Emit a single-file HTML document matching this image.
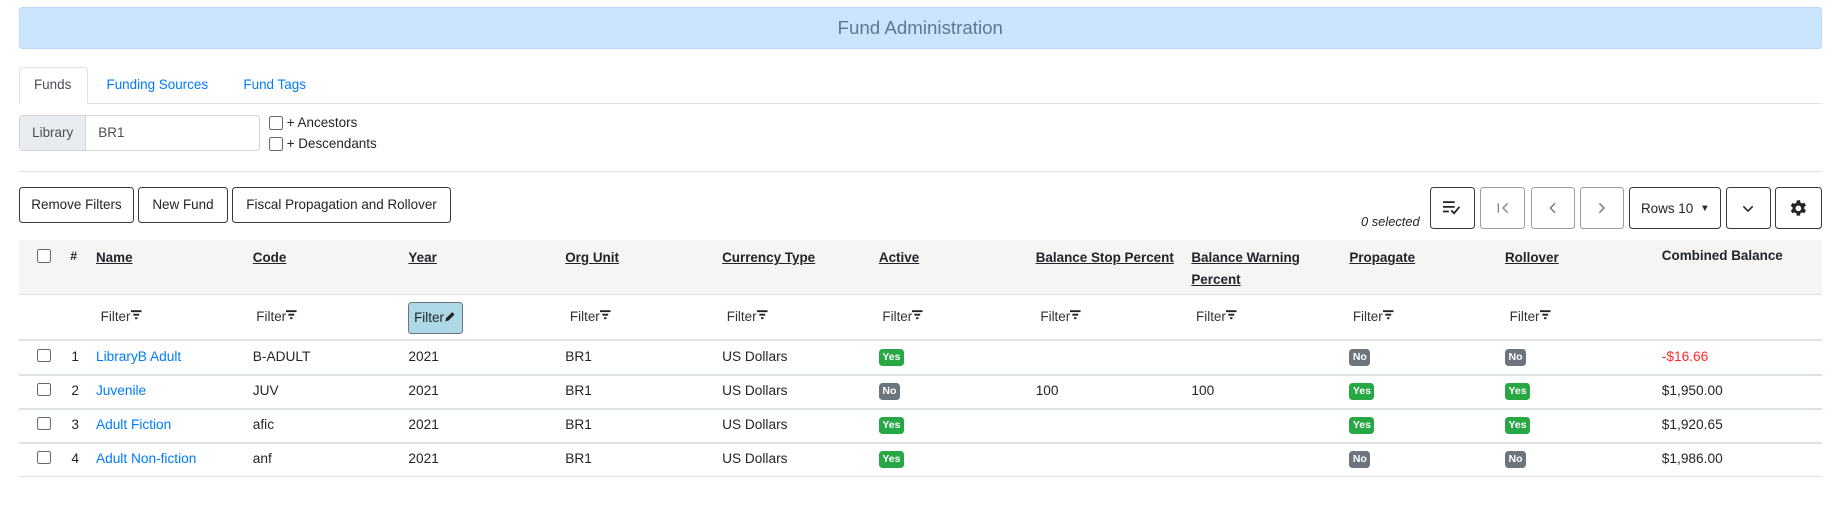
<!DOCTYPE html>
<html><head><meta charset="utf-8"><style>
html,body{margin:0;padding:0;background:#fff;width:1835px;height:505px;overflow:hidden}
#w{zoom:1.17028;position:relative;width:1568px;height:431px;font-family:"Liberation Sans",Arial,sans-serif;font-size:11.7px;color:#212529}
.a{position:absolute;white-space:nowrap}
.banner{left:16px;top:6px;width:1539px;height:34px;background:#cce5ff;border:1px solid #b8daff;border-radius:3px;text-align:center;line-height:34px;font-size:16px;color:#5b7896}
.tab{top:57px;height:31px;line-height:31px;color:#007bff;font-size:11.5px}
.btn{border:1px solid #343a40;border-radius:3px;height:29px;line-height:29px;text-align:center;font-size:11.5px;background:#fff}
.pb{top:160px;height:36px;border:1px solid #343a40;border-radius:3px;background:#fff;display:flex;align-items:center;justify-content:center;box-sizing:border-box}
.pb.dis{border-color:#9a9da0}
.th{top:214px;font-weight:bold;text-decoration:underline;font-size:11.5px}
.cb{width:10px;height:10px;border:1px solid #666;border-radius:2px;background:#fff}
.f{top:264px;font-size:11.5px;color:#333}
.f svg{vertical-align:top;margin-top:1px}
.line{left:16px;width:1541px;height:1px;background:#dee2e6}
.lk{color:#007bff}
.bd{font-size:9px;font-weight:bold;color:#fff;border-radius:3px;padding:2px 3px;line-height:11px}
.y{background:#28a745}.n{background:#6c757d}
</style></head><body><div id="w">
<div class="a banner">Fund Administration</div>

<div class="a" style="left:16px;top:57px;width:59px;height:32px;border:1px solid #dee2e6;border-bottom:1px solid #fff;border-radius:3px 3px 0 0;background:#fff;z-index:2;box-sizing:border-box"></div>
<div class="a tab" style="left:29px;color:#495057;z-index:3">Funds</div>
<div class="a tab" style="left:91px">Funding Sources</div>
<div class="a tab" style="left:208px">Fund Tags</div>
<div class="a line" style="top:88px"></div>

<div class="a" style="left:16px;top:98px;width:206px;height:31px;border:1px solid #ced4da;border-radius:3px;box-sizing:border-box"></div>
<div class="a" style="left:17px;top:99px;width:56px;height:29px;background:#e9ecef;border-right:1px solid #ced4da;line-height:29px;text-align:center;color:#495057;font-size:11.5px">Library</div>
<div class="a" style="left:84px;top:99px;line-height:29px;font-size:11.5px;color:#495057">BR1</div>
<div class="a cb" style="left:230px;top:99px"></div>
<div class="a" style="left:245px;top:98px;font-size:11.5px">+ Ancestors</div>
<div class="a cb" style="left:230px;top:117px"></div>
<div class="a" style="left:245px;top:116px;font-size:11.5px">+ Descendants</div>
<div class="a line" style="top:146px"></div>

<div class="a btn" style="left:16px;top:160px;width:97px">Remove Filters</div>
<div class="a btn" style="left:118px;top:160px;width:75px">New Fund</div>
<div class="a btn" style="left:198px;top:160px;width:186px">Fiscal Propagation and Rollover</div>

<div class="a" style="left:1163px;top:183px;font-size:11px;font-style:italic">0 selected</div>
<div class="a pb" style="left:1222px;width:38px"><svg width="16" height="12" viewBox="0 0 16 12"><path d="M0 1h10M0 5h10M0 9h5M7 8l2.5 2.5L14 5" stroke="#212529" stroke-width="1.5" fill="none"/></svg></div>
<div class="a pb dis" style="left:1265px;width:38px"><svg width="12" height="12"><path d="M2 2v8M10 2L6 6l4 4" stroke="#888" stroke-width="1.2" fill="none"/></svg></div>
<div class="a pb dis" style="left:1308px;width:38px"><svg width="8" height="12"><path d="M6 2L2 6l4 4" stroke="#777" stroke-width="1.2" fill="none"/></svg></div>
<div class="a pb dis" style="left:1350px;width:38px"><svg width="8" height="12"><path d="M2 2l4 4-4 4" stroke="#777" stroke-width="1.2" fill="none"/></svg></div>
<div class="a pb" style="left:1392px;width:79px;font-size:11.5px">Rows 10 <span style="margin-left:6px;font-size:8px">▼</span></div>
<div class="a pb" style="left:1475px;width:38px"><svg width="12" height="8"><path d="M2 2l4 4 4-4" stroke="#212529" stroke-width="1.3" fill="none"/></svg></div>
<div class="a pb" style="left:1517px;width:40px"><svg width="16" height="16" viewBox="0 0 16 16"><path fill="#212529" d="M9.4 1l.4 2 1.4.8 1.9-.7 1.4 2.4-1.5 1.3v1.6l1.5 1.3-1.4 2.4-1.9-.7-1.4.8-.4 2H6.6l-.4-2-1.4-.8-1.9.7L1.5 10l1.5-1.3V7.1L1.5 5.8 2.9 3.4l1.9.7 1.4-.8.4-2zM8 5.6a2.4 2.4 0 100 4.8 2.4 2.4 0 000-4.8z"/></svg></div>

<div class="a" style="left:16px;top:205px;width:1541px;height:46px;background:#f5f5f5"></div>
<div class="a line" style="top:251px"></div>
<div class="a cb" style="left:32px;top:213px"></div>
<div class="a" style="left:60px;top:213px;font-weight:bold;font-size:10.5px">#</div>
<div class="a th" style="left:82px">Name</div>
<div class="a th" style="left:216px">Code</div>
<div class="a th" style="left:349px">Year</div>
<div class="a th" style="left:483px">Org Unit</div>
<div class="a th" style="left:617px">Currency Type</div>
<div class="a th" style="left:751px">Active</div>
<div class="a th" style="left:885px">Balance Stop Percent</div>
<div class="a th" style="left:1018px;top:211px;line-height:19px">Balance Warning<br>Percent</div>
<div class="a th" style="left:1153px">Propagate</div>
<div class="a th" style="left:1286px">Rollover</div>
<div class="a th" style="left:1420px;top:212px;text-decoration:none">Combined Balance</div>

<div class="a f" style="left:86px">Filter<svg width="10" height="9"><path d="M0 1h9M2 4h5M3.5 7h2" stroke="#222" stroke-width="1.6"/></svg></div>
<div class="a f" style="left:219px">Filter<svg width="10" height="9"><path d="M0 1h9M2 4h5M3.5 7h2" stroke="#222" stroke-width="1.6"/></svg></div>
<div class="a" style="left:349px;top:258px;width:47px;height:27px;background:#add8e6;border:1px solid #6c757d;border-radius:3px;box-sizing:border-box;font-size:11.5px;line-height:25px;padding-left:4px">Filter<svg width="10" height="10" style="vertical-align:-1px"><path d="M1 9l1-3 5-5 2 2-5 5z" fill="#222"/></svg></div>
<div class="a f" style="left:487px">Filter<svg width="10" height="9"><path d="M0 1h9M2 4h5M3.5 7h2" stroke="#222" stroke-width="1.6"/></svg></div>
<div class="a f" style="left:621px">Filter<svg width="10" height="9"><path d="M0 1h9M2 4h5M3.5 7h2" stroke="#222" stroke-width="1.6"/></svg></div>
<div class="a f" style="left:754px">Filter<svg width="10" height="9"><path d="M0 1h9M2 4h5M3.5 7h2" stroke="#222" stroke-width="1.6"/></svg></div>
<div class="a f" style="left:889px">Filter<svg width="10" height="9"><path d="M0 1h9M2 4h5M3.5 7h2" stroke="#222" stroke-width="1.6"/></svg></div>
<div class="a f" style="left:1022px">Filter<svg width="10" height="9"><path d="M0 1h9M2 4h5M3.5 7h2" stroke="#222" stroke-width="1.6"/></svg></div>
<div class="a f" style="left:1156px">Filter<svg width="10" height="9"><path d="M0 1h9M2 4h5M3.5 7h2" stroke="#222" stroke-width="1.6"/></svg></div>
<div class="a f" style="left:1290px">Filter<svg width="10" height="9"><path d="M0 1h9M2 4h5M3.5 7h2" stroke="#222" stroke-width="1.6"/></svg></div>
<div class="a line" style="top:290px"></div>

<!-- row 1 -->
<div class="a cb" style="left:32px;top:298px"></div>
<div class="a" style="left:61px;top:298px">1</div>
<div class="a lk" style="left:82px;top:298px">LibraryB Adult</div>
<div class="a" style="left:216px;top:298px">B-ADULT</div>
<div class="a" style="left:349px;top:298px">2021</div>
<div class="a" style="left:483px;top:298px">BR1</div>
<div class="a" style="left:617px;top:298px">US Dollars</div>
<div class="a bd y" style="left:751px;top:298px">Yes</div>
<div class="a bd n" style="left:1153px;top:298px">No</div>
<div class="a bd n" style="left:1286px;top:298px">No</div>
<div class="a" style="left:1420px;top:298px;color:#ff2a2a">-$16.66</div>
<div class="a line" style="top:320px"></div>
<!-- row 2 -->
<div class="a cb" style="left:32px;top:327px"></div>
<div class="a" style="left:61px;top:327px">2</div>
<div class="a lk" style="left:82px;top:327px">Juvenile</div>
<div class="a" style="left:216px;top:327px">JUV</div>
<div class="a" style="left:349px;top:327px">2021</div>
<div class="a" style="left:483px;top:327px">BR1</div>
<div class="a" style="left:617px;top:327px">US Dollars</div>
<div class="a bd n" style="left:751px;top:327px">No</div>
<div class="a" style="left:885px;top:327px">100</div>
<div class="a" style="left:1018px;top:327px">100</div>
<div class="a bd y" style="left:1153px;top:327px">Yes</div>
<div class="a bd y" style="left:1286px;top:327px">Yes</div>
<div class="a" style="left:1420px;top:327px">$1,950.00</div>
<div class="a line" style="top:349px"></div>
<!-- row 3 -->
<div class="a cb" style="left:32px;top:356px"></div>
<div class="a" style="left:61px;top:356px">3</div>
<div class="a lk" style="left:82px;top:356px">Adult Fiction</div>
<div class="a" style="left:216px;top:356px">afic</div>
<div class="a" style="left:349px;top:356px">2021</div>
<div class="a" style="left:483px;top:356px">BR1</div>
<div class="a" style="left:617px;top:356px">US Dollars</div>
<div class="a bd y" style="left:751px;top:356px">Yes</div>
<div class="a bd y" style="left:1153px;top:356px">Yes</div>
<div class="a bd y" style="left:1286px;top:356px">Yes</div>
<div class="a" style="left:1420px;top:356px">$1,920.65</div>
<div class="a line" style="top:378px"></div>
<!-- row 4 -->
<div class="a cb" style="left:32px;top:385px"></div>
<div class="a" style="left:61px;top:385px">4</div>
<div class="a lk" style="left:82px;top:385px">Adult Non-fiction</div>
<div class="a" style="left:216px;top:385px">anf</div>
<div class="a" style="left:349px;top:385px">2021</div>
<div class="a" style="left:483px;top:385px">BR1</div>
<div class="a" style="left:617px;top:385px">US Dollars</div>
<div class="a bd y" style="left:751px;top:385px">Yes</div>
<div class="a bd n" style="left:1153px;top:385px">No</div>
<div class="a bd n" style="left:1286px;top:385px">No</div>
<div class="a" style="left:1420px;top:385px">$1,986.00</div>
<div class="a line" style="top:407px"></div>
</div></body></html>
